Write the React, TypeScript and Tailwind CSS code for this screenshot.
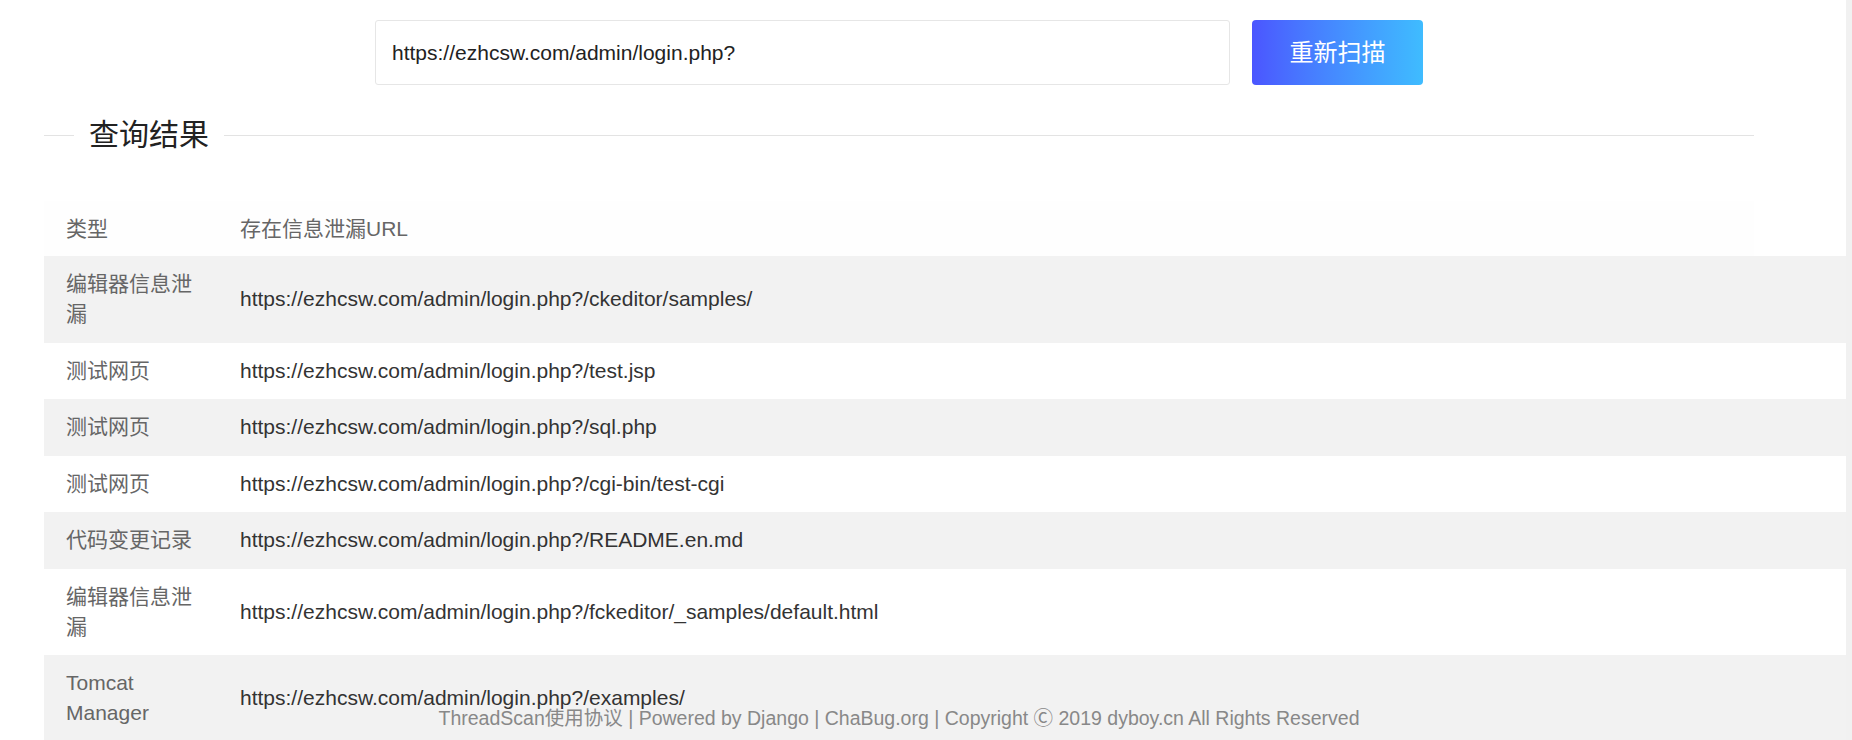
import React from "react";

const rows: { type: string; url: string; gray: boolean }[] = [
  { type: "编辑器信息泄漏", url: "https://ezhcsw.com/admin/login.php?/ckeditor/samples/", gray: true },
  { type: "测试网页", url: "https://ezhcsw.com/admin/login.php?/test.jsp", gray: false },
  { type: "测试网页", url: "https://ezhcsw.com/admin/login.php?/sql.php", gray: true },
  { type: "测试网页", url: "https://ezhcsw.com/admin/login.php?/cgi-bin/test-cgi", gray: false },
  { type: "代码变更记录", url: "https://ezhcsw.com/admin/login.php?/README.en.md", gray: true },
  { type: "编辑器信息泄漏", url: "https://ezhcsw.com/admin/login.php?/fckeditor/_samples/default.html", gray: false },
  { type: "Tomcat Manager", url: "https://ezhcsw.com/admin/login.php?/examples/", gray: true },
];

export default function App() {
  return (
    <div
      className="relative h-[740px] w-full overflow-hidden bg-[#f1f1f1]"
      style={{ fontFamily: '"Liberation Sans", "Noto Sans CJK SC", sans-serif' }}
    >
      <div className="h-full w-[1846px] bg-white">
        <div className="flex w-[1798px] flex-col">
          <div className="flex justify-center gap-[22px] pt-[20px]">
            <div className="flex h-[65px] w-[855px] items-center rounded-[3px] border border-[#e6e6e6] bg-white pl-[16px] text-[21px] text-[#222]">
              https://ezhcsw.com/admin/login.php?
            </div>
            <button className="flex h-[65px] w-[171px] items-center justify-center rounded-[4px] bg-linear-to-r from-[#4b55ff] to-[#3fbcff] text-[24px] text-white">
              重新扫描
            </button>
          </div>
          <div className="mt-[30px] flex items-center px-[44px]">
            <div className="h-px w-[30px] bg-[#e3e3e3]" />
            <div className="mx-[15px] text-[30px] leading-[40px] text-[#222]">查询结果</div>
            <div className="h-px flex-1 bg-[#e3e3e3]" />
          </div>
        </div>
        <div className="ml-[44px] mt-[46px] flex flex-col text-[21px]">
          <div className="flex h-[55px] w-[1710px] items-center bg-[#fefefe] text-[#666]">
            <div className="w-[196px] shrink-0 pl-[22px] pr-[40px]">类型</div>
            <div className="flex-1">存在信息泄漏URL</div>
          </div>
          {rows.map((r, i) => (
            <div
              key={i}
              className={`flex items-center py-[13.25px] leading-[30px] ${r.gray ? "bg-[#f2f2f2]" : "bg-white"}`}
            >
              <div className="w-[196px] shrink-0 pl-[22px] pr-[40px] text-[#666]">{r.type}</div>
              <div className="flex-1 text-[#333]">{r.url}</div>
            </div>
          ))}
        </div>
      </div>
      <div className="absolute bottom-[8px] left-0 w-[1798px] text-center text-[19.5px] leading-[28px] text-[#888]">
        ThreadScan使用协议 | Powered by Django | ChaBug.org | Copyright Ⓒ 2019 dyboy.cn All Rights Reserved
      </div>
    </div>
  );
}
